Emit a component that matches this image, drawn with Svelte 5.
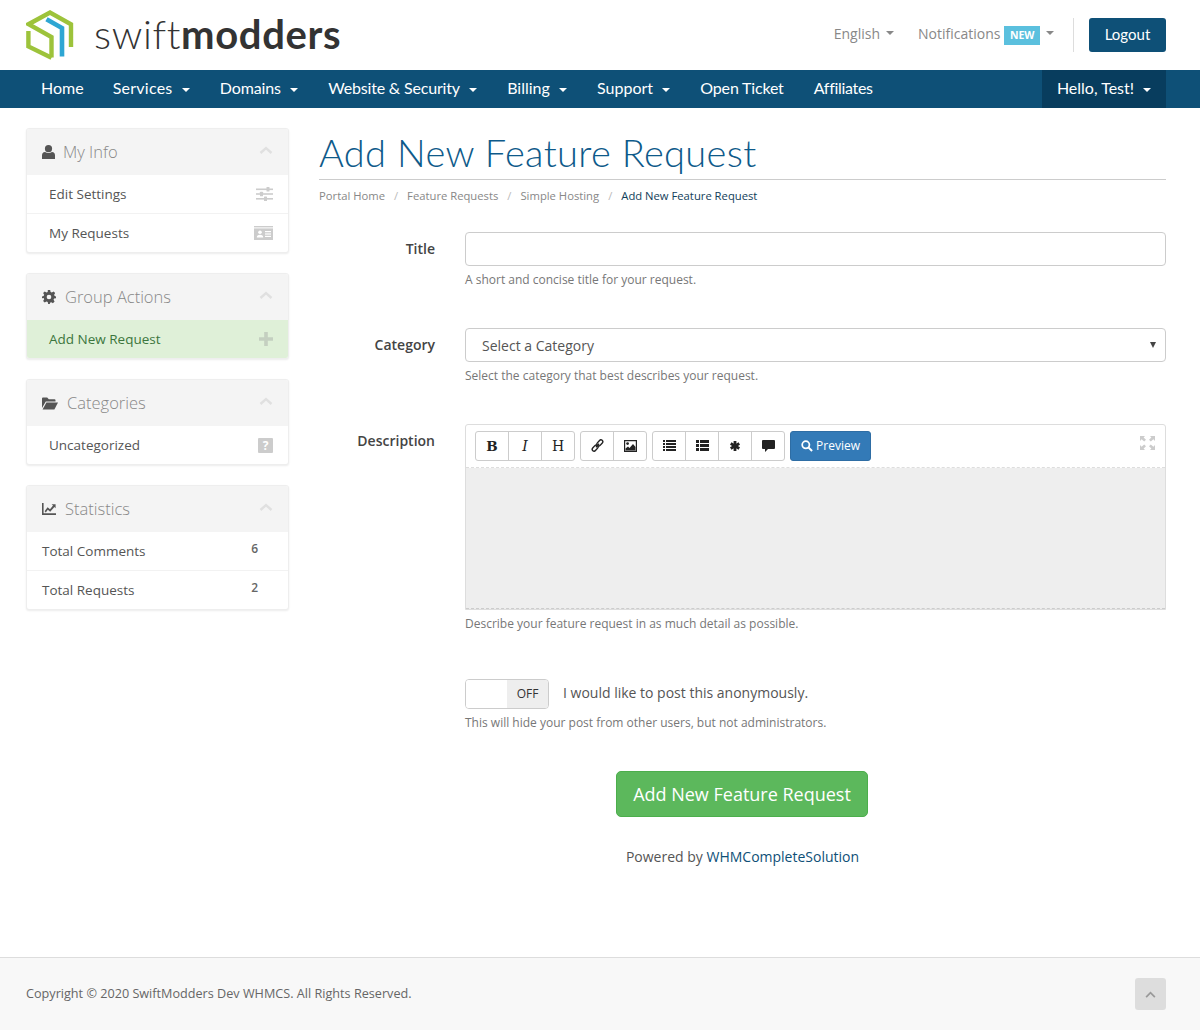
<script>
  const navLeft = [
    { t: 'Home' }, { t: 'Services', c: true }, { t: 'Domains', c: true },
    { t: 'Website & Security', c: true }, { t: 'Billing', c: true }, { t: 'Support', c: true },
    { t: 'Open Ticket' }, { t: 'Affiliates' }
  ];
</script>

<div class="page">
  <header class="top">
    <div class="brand">
      <svg class="logo" viewBox="0 0 48 50" width="48" height="50" aria-hidden="true">
        <g fill="none" stroke="#9dc33b" stroke-width="4.4" stroke-linejoin="miter">
          <path d="M45 37 V14.2 L24 2.6 L2.6 14.2 L25.5 27 V47.5"/>
          <path d="M2.4 21 V36.5 L25.5 47.8"/>
        </g>
        <path d="M20.5 9.2 L36 18 V46.5" fill="none" stroke="#2ea6d3" stroke-width="4.6"/>
      </svg>
      <span class="word"><span class="w1">swift</span><span class="w2">modders</span></span>
    </div>
    <div class="top-right">
      <span class="tlink">English <i class="caret grey"></i></span>
      <span class="tlink notif">Notifications <span class="new">NEW</span> <i class="caret grey"></i></span>
      <span class="vsep"></span>
      <span class="logout">Logout</span>
    </div>
  </header>

  <nav class="nav">
    <ul class="nav-left">
      {#each navLeft as n}
        <li class:has-caret={n.c}>{n.t}{#if n.c}<i class="caret white"></i>{/if}</li>
      {/each}
    </ul>
    <div class="hello">Hello, Test!<i class="caret white"></i></div>
  </nav>

  <div class="body">
    <aside class="side">
      <section class="panel">
        <div class="phead">
          <svg class="hi" viewBox="0 0 13 14" width="13" height="14"><circle cx="6.5" cy="3.7" r="3.6" fill="#555"/><path d="M0 14 V10.4 Q0 7.4 3 7 Q6.5 9 10 7 Q13 7.4 13 10.4 V14 Z" fill="#555"/></svg>
          <span class="ptitle">My Info</span>
          <svg class="chev" viewBox="0 0 14 8" width="14" height="8"><path d="M1.5 7 L7 2 L12.5 7" fill="none" stroke="#e0e0e0" stroke-width="2.4"/></svg>
        </div>
        <div class="row">
          <span>Edit Settings</span>
          <svg class="ri" viewBox="0 0 17 14" width="17" height="14"><g fill="#ccc"><rect y="1.5" width="17" height="1.6"/><rect y="6.2" width="17" height="1.6"/><rect y="11" width="17" height="1.6"/><rect x="10.5" y="0" width="3" height="4.6" rx=".6"/><rect x="4" y="4.7" width="3" height="4.6" rx=".6"/><rect x="8" y="9.5" width="3" height="4.5" rx=".6"/></g></svg>
        </div>
        <div class="row">
          <span>My Requests</span>
          <svg class="ri" viewBox="0 0 19 14" width="19" height="14"><rect y="0" width="19" height="1.4" fill="#ccc"/><rect y="2.4" width="19" height="11.6" fill="#ccc"/><circle cx="6" cy="6.2" r="1.8" fill="#fff"/><path d="M2.8 11.6 Q2.8 8.8 6 8.8 Q9.2 8.8 9.2 11.6Z" fill="#fff"/><rect x="11" y="5" width="6" height="1.2" fill="#fff"/><rect x="11" y="7.4" width="6" height="1.2" fill="#fff"/><rect x="11" y="9.8" width="6" height="1.2" fill="#fff"/></svg>
        </div>
      </section>

      <section class="panel">
        <div class="phead">
          <svg class="hi" viewBox="0 0 24 24" width="14" height="14"><path fill="#555" fill-rule="evenodd" d="M10 0h4l.7 3.3 2.2.9L19.8 2.4l2.8 2.8-1.8 2.9.9 2.2L24 11v3l-3.3.7-.9 2.2 1.8 2.9-2.8 2.8-2.9-1.8-2.2.9L13.5 24h-3l-.7-3.3-2.2-.9-2.9 1.8-2.8-2.8 1.8-2.9-.9-2.2L0 14v-3l2.8-.7.9-2.2-1.8-2.9 2.8-2.8 2.9 1.8 2.2-.9ZM12 8a4 4 0 1 0 0 8 4 4 0 0 0 0-8Z"/></svg>
          <span class="ptitle t2">Group Actions</span>
          <svg class="chev" viewBox="0 0 14 8" width="14" height="8"><path d="M1.5 7 L7 2 L12.5 7" fill="none" stroke="#e0e0e0" stroke-width="2.4"/></svg>
        </div>
        <div class="row active">
          <span>Add New Request</span>
          <svg class="ri" viewBox="0 0 14 14" width="14" height="14"><path d="M5.2 0h3.6v5.2H14v3.6H8.8V14H5.2V8.8H0V5.2h5.2Z" fill="#c4cfc0"/></svg>
        </div>
      </section>

      <section class="panel">
        <div class="phead">
          <svg class="hi" viewBox="0 0 16 13" width="16" height="13"><path fill="#555" d="M0 11V1.5Q0 .5 1 .5H5.2L6.8 2.2H12.5Q13.5 2.2 13.5 3.2V4.6H3.8L0 11Z"/><path fill="#555" d="M4.4 5.6H16L12.4 12.5H.6Z"/></svg>
          <span class="ptitle t3">Categories</span>
          <svg class="chev" viewBox="0 0 14 8" width="14" height="8"><path d="M1.5 7 L7 2 L12.5 7" fill="none" stroke="#e0e0e0" stroke-width="2.4"/></svg>
        </div>
        <div class="row">
          <span>Uncategorized</span>
          <span class="qbox">?</span>
        </div>
      </section>

      <section class="panel">
        <div class="phead">
          <svg class="hi" viewBox="0 0 14 12" width="14" height="12"><path d="M0 0H1.6V10.2H14V12H0Z" fill="#555"/><path d="M2.6 8.2 L5.6 4.2 L8 6.2 L11 2.4 L9.6 1.2 H13.6 V5.2 L12.4 4 L8.2 8.8 L5.8 6.8 L3.8 9.4Z" fill="#555"/></svg>
          <span class="ptitle t2">Statistics</span>
          <svg class="chev" viewBox="0 0 14 8" width="14" height="8"><path d="M1.5 7 L7 2 L12.5 7" fill="none" stroke="#e0e0e0" stroke-width="2.4"/></svg>
        </div>
        <div class="row stat"><span>Total Comments</span><b>6</b></div>
        <div class="row stat"><span>Total Requests</span><b>2</b></div>
      </section>
    </aside>

    <main class="main">
      <h1>Add New Feature Request</h1>
      <div class="crumbs">
        <span>Portal Home</span><i>/</i><span>Feature Requests</span><i>/</i><span>Simple Hosting</span><i>/</i><span class="cur">Add New Feature Request</span>
      </div>

      <div class="field f1">
        <div class="lab">Title</div>
        <div class="ctl">
          <div class="input"></div>
          <p class="help">A short and concise title for your request.</p>
        </div>
      </div>

      <div class="field f2">
        <div class="lab">Category</div>
        <div class="ctl">
          <div class="input select">Select a Category<span class="arrow"></span></div>
          <p class="help">Select the category that best describes your request.</p>
        </div>
      </div>

      <div class="field f3">
        <div class="lab">Description</div>
        <div class="ctl">
          <div class="editor">
            <div class="toolbar">
              <div class="grp">
                <span class="tb serif b">B</span><span class="tb serif it">I</span><span class="tb serif h">H</span>
              </div>
              <div class="grp">
                <span class="tb">
                  <svg viewBox="0 0 14 14" width="13" height="13"><g fill="none" stroke="#222" stroke-width="1.5" transform="rotate(-48 7 7)"><rect x="-.5" y="5" width="7.5" height="4" rx="2"/><rect x="7" y="5" width="7.5" height="4" rx="2"/><path d="M4.5 7H9.5"/></g></svg>
                </span>
                <span class="tb">
                  <svg viewBox="0 0 13 12" width="13" height="12"><path fill="#222" fill-rule="evenodd" d="M0 0H13V12H0Z M1.2 1.2V10.8H11.8V1.2Z"/><circle cx="3.6" cy="3.6" r="1.4" fill="#222"/><path d="M1.5 10.5V8.5L4 6.5 5.5 8 9 4 11.5 7V10.5Z" fill="#222"/></svg>
                </span>
              </div>
              <div class="grp">
                <span class="tb">
                  <svg viewBox="0 0 13 11" width="13" height="11"><g fill="#222"><rect width="2" height="2"/><rect y="3" width="2" height="2"/><rect y="6" width="2" height="2"/><rect y="9" width="2" height="2"/><rect x="3" width="10" height="2"/><rect x="3" y="3" width="10" height="2"/><rect x="3" y="6" width="10" height="2"/><rect x="3" y="9" width="10" height="2"/></g></svg>
                </span>
                <span class="tb">
                  <svg viewBox="0 0 13 11" width="13" height="11"><g fill="#222"><rect width="3" height="3"/><rect y="4" width="3" height="3"/><rect y="8" width="3" height="3"/><rect x="4" width="9" height="3"/><rect x="4" y="4" width="9" height="3"/><rect x="4" y="8" width="9" height="3"/></g></svg>
                </span>
                <span class="tb">
                  <svg viewBox="0 0 10 10" width="10" height="10"><g stroke="#222" stroke-width="2.8"><path d="M5 0V10"/><path d="M.7 2.5L9.3 7.5"/><path d="M9.3 2.5L.7 7.5"/></g></svg>
                </span>
                <span class="tb">
                  <svg viewBox="0 0 13 12" width="13" height="12"><path fill="#222" d="M1 0H12Q13 0 13 1V8Q13 9 12 9H6L3 12V9H1Q0 9 0 8V1Q0 0 1 0Z"/></svg>
                </span>
              </div>
              <span class="preview">
                <svg viewBox="0 0 13 13" width="12" height="12"><circle cx="5.2" cy="5.2" r="3.9" fill="none" stroke="#fff" stroke-width="1.9"/><path d="M8 8L12 12" stroke="#fff" stroke-width="2.2"/></svg>
                Preview
              </span>
              <svg class="expand" viewBox="0 0 15 14" width="15" height="14"><g fill="#ccc"><path d="M0 0H5L3.6 1.4 6 3.8 4.2 5.6 1.6 3.2 0 5Z"/><path d="M15 0H10L11.4 1.4 9 3.8 10.8 5.6 13.4 3.2 15 5Z"/><path d="M0 14H5L3.6 12.6 6 10.2 4.2 8.4 1.6 10.8 0 9Z"/><path d="M15 14H10L11.4 12.6 9 10.2 10.8 8.4 13.4 10.8 15 9Z"/></g></svg>
            </div>
            <div class="area"></div>
          </div>
          <p class="help">Describe your feature request in as much detail as possible.</p>
        </div>
      </div>

      <div class="field f4">
        <div class="lab"></div>
        <div class="ctl">
          <div class="anon">
            <div class="switch"><span class="knob"></span><span class="off">OFF</span></div>
            <span class="anon-t">I would like to post this anonymously.</span>
          </div>
          <p class="help">This will hide your post from other users, but not administrators.</p>
        </div>
      </div>

      <div class="submit"><span class="btn">Add New Feature Request</span></div>
      <p class="powered">Powered by <span>WHMCompleteSolution</span></p>
    </main>
  </div>

  <footer class="foot">
    <span class="copy">Copyright © 2020 SwiftModders Dev WHMCS. All Rights Reserved.</span>
    <span class="up"><svg viewBox="0 0 12 8" width="11" height="7"><path d="M1 7L6 2L11 7" fill="none" stroke="#999" stroke-width="2"/></svg></span>
  </footer>
</div>

<style>
  :global(body) { margin: 0; background: #fff; }
  .page {
    font-family: "Open Sans", "Noto Sans", sans-serif;
    font-size: 14px;
    color: #444;
    height: 1030px;
    display: flex;
    flex-direction: column;
    overflow: hidden;
  }
  .top {
    height: 70px;
    padding: 0 34px 0 26px;
    display: flex;
    align-items: center;
    justify-content: space-between;
    box-sizing: border-box;
  }
  .brand { display: flex; align-items: center; gap: 20px; }
  .logo { display: block; }
  .word { font-family: "Lato", sans-serif; font-size: 40px; color: #333; letter-spacing: .65px; line-height: 1; margin-bottom: 3px; }
  .w1 { font-weight: 300; }
  .w2 { font-weight: 700; }
  .top-right { display: flex; align-items: center; }
  .tlink { color: #888; font-size: 14px; display: inline-flex; align-items: center; margin-bottom: 4px; }
  .notif { margin-left: 24px; }
  .new {
    background: #5bc0de; color: #fff; font-size: 10.5px; font-weight: 700;
    padding: 0 5.5px; height: 19px; line-height: 19px; margin-left: 4px; margin-top: 4px;
  }
  .caret {
    display: inline-block; width: 0; height: 0;
    border-left: 4px solid transparent; border-right: 4px solid transparent; border-top: 4px solid;
    margin-left: 6px;
  }
  .caret.grey { color: #888; }
  .caret.white { color: #fff; margin-left: 9px; vertical-align: middle; }
  .vsep { width: 1px; height: 34px; background: #ddd; margin: 0 15px 0 19px; }
  .logout {
    background: #0e5077; color: #fff; width: 77px; height: 34px; line-height: 33px;
    border-radius: 3px; text-align: center; font-family: "Lato", sans-serif; font-size: 15px;
  }
  .nav {
    height: 38px;
    background: #0e5077;
    padding: 0 34px 0 26px;
    display: flex;
    justify-content: space-between;
    color: #fff;
    font-family: "Lato", sans-serif;
    font-size: 16px;
  }
  .nav-left { list-style: none; margin: 0; padding: 0; display: flex; }
  .nav-left li { padding: 0 15px; line-height: 36px; margin-right: -1px; }
  .nav-left li.has-caret { margin-right: .25px; }
  .nav-left li:nth-child(2) { letter-spacing: .25px; }
  .nav-left li:nth-child(3) { letter-spacing: -.12px; }
  .nav-left li:nth-child(4) { letter-spacing: -.17px; }
  .nav-left li:nth-child(7) { letter-spacing: -.18px; margin-right: 0; }
  .nav-left li:nth-child(8) { letter-spacing: -.3px; }
  .hello { background: #083d5e; width: 124px; text-align: center; line-height: 36px; }
  .body { flex: 1; display: flex; padding: 20px 34px 0 26px; gap: 30px; min-height: 0; }
  .side { width: 263px; flex: none; display: flex; flex-direction: column; gap: 20px; }
  .panel {
    border: 1px solid #eee; border-radius: 3px; box-shadow: 0 1px 2px rgba(0,0,0,.08);
    overflow: hidden; background: #fff;
  }
  .phead {
    height: 46px; background: #f4f4f4; display: flex; align-items: center; padding: 0 15px; position: relative;
  }
  .hi { flex: none; }
  .ptitle { font-size: 16.5px; color: #888; font-weight: 300; margin-left: 8px; margin-top: -1px; }
  .t2 { margin-left: 9px; }
  .t3 { margin-left: 9px; }
  .chev { margin-left: auto; margin-top: -4px; }
  .row {
    height: 38px; display: flex; align-items: center; justify-content: space-between;
    padding: 0 15px 0 22px; border-top: 1px solid #f2f2f2; box-sizing: content-box; color: #555;
    font-size: 13.5px;
  }
  .phead + .row { border-top: 0; }
  .row.active { background: #dff0d8; color: #3c763d; }
  .qbox { width: 15px; height: 15px; background: #ccc; color: #fff; font-weight: 700; font-size: 12px; text-align: center; line-height: 15px; border-radius: 1px; }
  .row.stat { padding: 0 30px 0 15px; }
  .row.stat b { font-weight: 600; font-size: 12px; color: #666; margin-top: -5px; }
  .main { flex: 1; min-width: 0; display: flex; flex-direction: column; }
  h1 {
    margin: 1px 0 0; font-family: "Lato", sans-serif; font-weight: 300; font-size: 38px; color: #0e5a8a;
    height: 50px; line-height: 46px; border-bottom: 1px solid #ccc; letter-spacing: .34px;
  }
  .crumbs { font-size: 11.25px; color: #888; margin-top: 8px; height: 16px; line-height: 16px; display: flex; }
  .crumbs i { font-style: normal; color: #bbb; margin: 0 9px; }
  .crumbs .cur { color: #123e5a; }
  .field { display: flex; }
  .lab { width: 116px; flex: none; text-align: right; font-weight: 600; color: #444; line-height: 34px; }
  .ctl { margin-left: 30px; flex: 1; min-width: 0; }
  .f1 { margin-top: 28px; }
  .f2 { margin-top: 40px; }
  .f3 { margin-top: 40px; }
  .f4 { margin-top: 47px; }
  .input {
    height: 34px; border: 1px solid #ccc; border-radius: 4px; box-sizing: border-box; position: relative;
    line-height: 34px;
  }
  .select { padding-left: 16px; color: #555; }
  .arrow {
    position: absolute; right: 9px; top: 13px; width: 0; height: 0;
    border-left: 3px solid transparent; border-right: 3px solid transparent; border-top: 6px solid #444;
  }
  .help { margin: 6px 0 0; font-size: 12px; color: #777; line-height: 16px; }
  .editor { border: 1px solid #ddd; border-radius: 3px 3px 0 0; box-sizing: border-box; }
  .toolbar { height: 43px; display: flex; align-items: center; padding: 0 10px 1px 9px; gap: 5px; box-sizing: border-box; border-bottom: 1px dashed #ddd; position: relative; }
  .grp { display: flex; border: 1px solid #ccc; border-radius: 3px; height: 28px; background: #fff; }
  .tb {
    width: 33px; display: flex; align-items: center; justify-content: center; color: #222; box-sizing: border-box;
  }
  .tb:first-child { width: 32px; }
  .tb + .tb { border-left: 1px solid #ccc; }
  .serif { font-family: "DejaVu Serif", "Liberation Serif", serif; font-size: 14px; }
  .b { font-weight: 700; font-size: 13.5px; }
  .it { font-style: italic; }
  .preview {
    background: #337ab7; color: #fff; border-radius: 3px; height: 30px; width: 81px; display: flex; align-items: center;
    justify-content: center; gap: 3px; font-size: 12px; border: 1px solid #2e6da4; box-sizing: border-box;
  }
  .expand { position: absolute; right: 10px; top: 11px; }
  .area { height: 140px; background: #eee; border-bottom: 1px dashed #ccc; }
  .anon { display: flex; align-items: center; }
  .switch { width: 84px; height: 30px; border: 1px solid #ccc; border-radius: 4px; box-sizing: border-box; display: flex; overflow: hidden; }
  .knob { width: 41px; background: #fff; }
  .off { flex: 1; background: #eee; font-size: 12px; text-align: center; line-height: 28px; color: #333; }
  .anon-t { margin-left: 14px; color: #555; margin-top: -3px; }
  .submit { margin-top: 40px; display: flex; justify-content: center; padding-right: 1px; }
  .btn {
    background: #5cb85c; border: 1px solid #4cae4c; color: #fff; font-size: 18px; border-radius: 5px;
    width: 252px; height: 46px; line-height: 44px; text-align: center; box-sizing: border-box;
  }
  .powered { margin: 30px 0 0; text-align: center; color: #555; line-height: 20px; }
  .powered span { color: #0e5077; }
  .foot {
    height: 73px; background: #f8f8f8; border-top: 1px solid #ddd; box-sizing: border-box; flex: none;
    display: flex; align-items: center; justify-content: space-between; padding: 0 34px 0 26px;
    font-size: 12.65px; color: #666;
  }
  .copy { margin-top: -2px; }
  .up { width: 31px; height: 32px; background: #ddd; border-radius: 3px; display: flex; align-items: center; justify-content: center; }
</style>
